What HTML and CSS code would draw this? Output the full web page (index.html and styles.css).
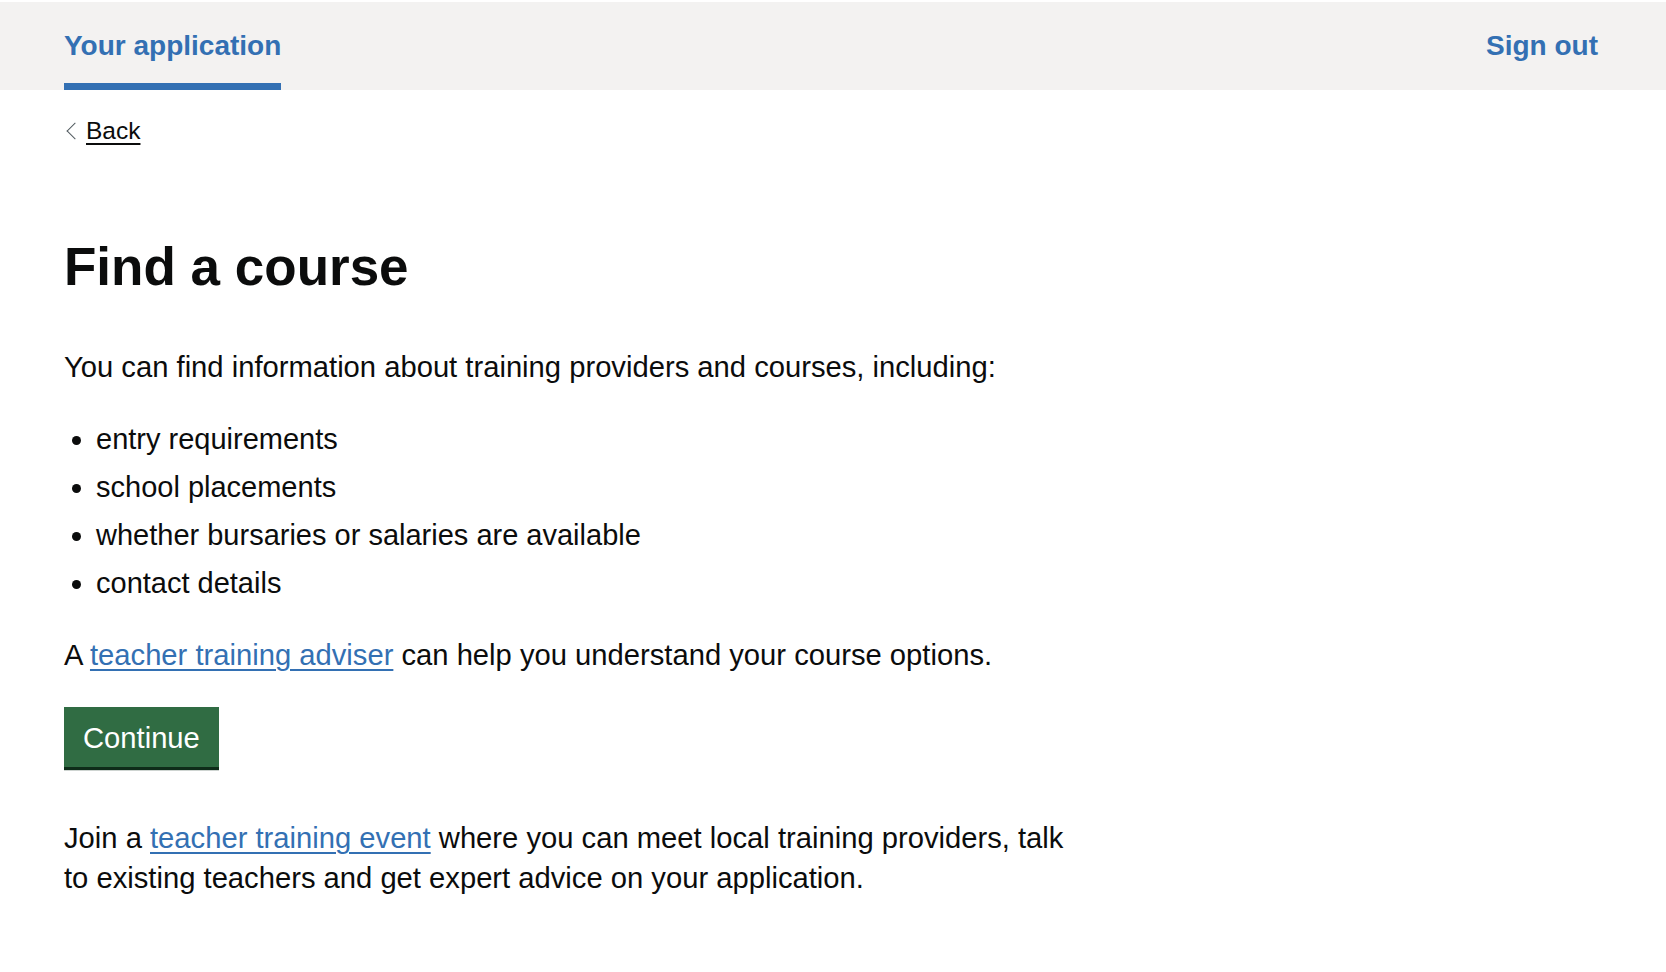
FILE: index.html
```html
<!DOCTYPE html>
<html lang="en">
<head>
<meta charset="utf-8">
<title>Find a course</title>
<link rel="stylesheet" href="styles.css">
</head>
<body>
<header class="app-header">
  <div class="app-header__inner">
    <nav class="app-nav">
      <a class="app-nav__link app-nav__link--active" href="#">Your application</a>
    </nav>
    <a class="app-nav__link" href="#">Sign out</a>
  </div>
</header>
<div class="width-container">
  <div class="back-row">
    <a class="back-link" href="#">Back</a>
  </div>
  <main class="main-wrapper">
    <div class="two-thirds">
      <h1 class="heading-l">Find a course</h1>
      <p class="body">You can find information about training providers and courses, including:</p>
      <ul class="bullet-list">
        <li>entry requirements</li>
        <li>school placements</li>
        <li>whether bursaries or salaries are available</li>
        <li>contact details</li>
      </ul>
      <p class="body">A <a class="link" href="#">teacher training adviser</a> can help you understand your course options.</p>
      <button class="button" type="button">Continue</button>
      <p class="body">Join a <a class="link" href="#">teacher training event</a> where you can meet local training providers, talk to existing teachers and get expert advice on your application.</p>
    </div>
  </main>
</div>
</body>
</html>
```
FILE: styles.css
```css
* {
  box-sizing: border-box;
}

html, body {
  margin: 0;
  padding: 0;
  background: #ffffff;
}

body {
  font-family: "Liberation Sans", Arial, sans-serif;
  color: #0b0c0c;
  padding-top: 2px;
}

.app-header {
  background: #f3f2f1;
}

.app-header__inner {
  padding: 0 68px 0 64px;
  display: flex;
  justify-content: space-between;
  align-items: stretch;
}

.app-nav {
  display: flex;
}

.app-nav__link {
  display: block;
  font-weight: 700;
  font-size: 28px;
  line-height: 32px;
  color: #3370b3;
  text-decoration: none;
  padding-top: 28px;
  padding-bottom: 21px;
  border-bottom: 7px solid transparent;
}

.app-nav__link--active {
  border-bottom-color: #3370b3;
}

.width-container {
  padding: 0 64px;
}

.back-row {
  display: flex;
  padding: 25px 0 24px;
}

.back-link {
  position: relative;
  display: block;
  padding-left: 22px;
  font-size: 24.5px;
  line-height: 32px;
  color: #0b0c0c;
  text-decoration: underline;
  text-decoration-thickness: 2px;
  text-underline-offset: 4px;
}

.back-link::before {
  content: "";
  position: absolute;
  top: 0;
  bottom: 0;
  left: 5px;
  width: 11px;
  height: 11px;
  margin: auto 0;
  border-top: 1.6px solid #505a5f;
  border-left: 1.6px solid #505a5f;
  transform: rotate(-45deg);
}

.main-wrapper {
  padding-top: 64px;
}

.two-thirds {
  max-width: 1008px;
}

.heading-l {
  margin: 0 0 48px;
  font-size: 53px;
  line-height: 64px;
  font-weight: 700;
}

.body {
  margin: 0 0 32px;
  font-size: 29.2px;
  line-height: 40px;
}

.bullet-list {
  margin: 0 0 32px;
  padding-left: 32px;
  list-style: disc;
  font-size: 29px;
  line-height: 40px;
}

.bullet-list li {
  margin-bottom: 8px;
}

.bullet-list li:last-child {
  margin-bottom: 0;
}

.link {
  color: #3370b3;
  text-decoration: underline;
  text-decoration-thickness: 2px;
  text-underline-offset: 4px;
}

.button {
  display: block;
  margin: 0 0 51px;
  padding: 12.8px 16px 11.2px;
  border: 3.2px solid transparent;
  border-radius: 0;
  background: #306c43;
  box-shadow: 0 3.2px 0 #0e2c19;
  color: #ffffff;
  font-family: "Liberation Sans", Arial, sans-serif;
  font-size: 29.2px;
  line-height: 30.4px;
  cursor: pointer;
}
```
